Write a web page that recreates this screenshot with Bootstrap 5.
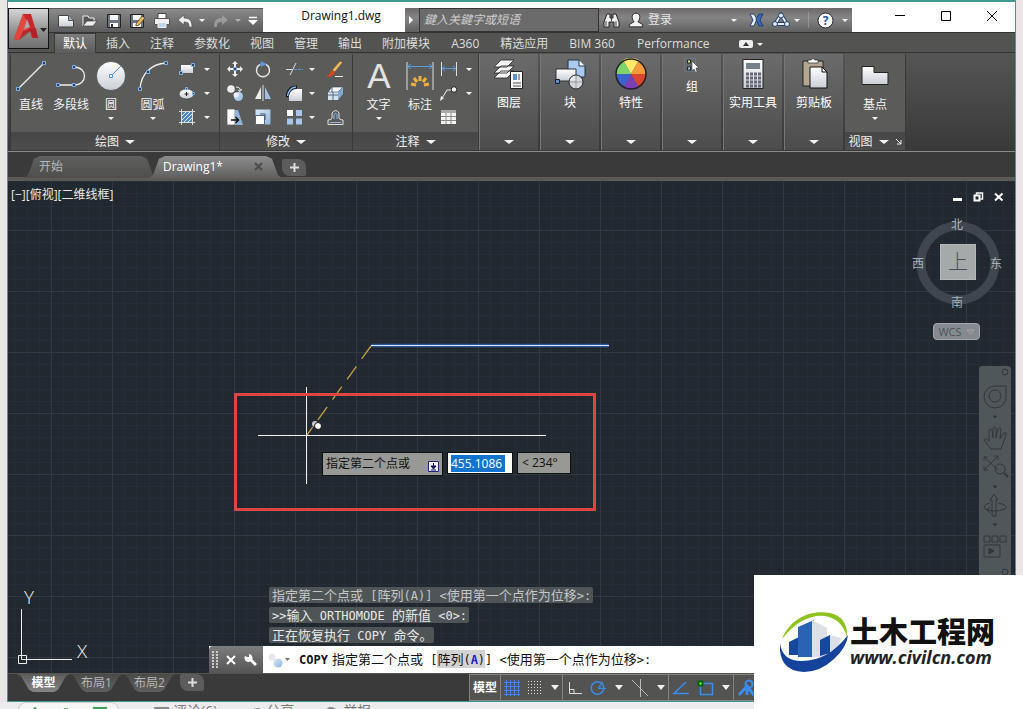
<!DOCTYPE html>
<html lang="zh-CN">
<head>
<meta charset="utf-8">
<meta name="viewport" content="width=device-width, initial-scale=1">
<title>Drawing1.dwg</title>
<link href="https://cdn.jsdelivr.net/npm/bootstrap@5.3.0/dist/css/bootstrap.min.css" rel="stylesheet">
<style>
body{font:12px/16px "Open Sans","Noto Sans CJK SC",sans-serif;color:#e6e6e6;background:#ebe5e8}
button,input{font:inherit;color:inherit;background:none;border:0;padding:0}
button{display:flex;align-items:center;justify-content:center}
svg{display:block;flex:none}
.app-window{margin:0 7px;border:1px solid #3f9a94;border-top-width:2px;background:#3a3a3a;min-height:0}
.titlebar{background:#fff;padding-top:6px;height:30px}
.qat{width:255px;padding-left:46px;background:linear-gradient(#8a8a8a,#5c5c5c);border-top:1px solid #555}
.qat .tool{width:24px}.qat .gap-arrow{width:10px}.qat .redo{width:26px;opacity:.45}.qat .more{width:20px}
.doc-title{color:#111;padding-left:14px;height:18px}
.infobar{width:447px;background:linear-gradient(#6c686a,#858585 40%,#606060)}
.expander{width:12px}
.search{width:180px;margin-left:2px;padding-left:4px;background:#6b6b6b;border:1px solid #333;font-style:italic}
.search::placeholder{color:#cfcfcf;opacity:1}
.win-ctl{width:163px;height:18px;color:#000}
.win-ctl button{width:46px}
.app-btn{left:0;top:6px;width:41px;height:41px;background:linear-gradient(#d5d5d5,#8d8d8d 60%,#6f6f6f);border:1px solid #111;z-index:3}
.tri{display:inline-block;width:0;height:0;border:3px solid transparent;border-top-color:#f2f2f2;border-bottom:0}
.tri-lg{border-width:4px 5px 0}
.tri-tall{border-width:5px 4px 0}
.ribbon-tabs{height:21px;background:#535451;padding-left:46px;border-top:1px solid #333;border-bottom:1px solid #333}
.ribbon-tabs button{padding:2px 10px 0;color:#dcdcdc;margin-bottom:-1px}
.ribbon-tabs .latin{padding:2px 11px 0}
.ribbon-tabs .current{background:linear-gradient(#7b7b7b,#5c5c5c);border:1px solid #3a3a3a;border-bottom:0;padding:1px 8px 0;color:#fff}
.ribbon{height:99px;padding:1px 0 1px 2px;background:linear-gradient(#555,#393939);border-bottom:1px solid #8c8c8c}
.panel{background:#5b5c5a;border-right:1px solid #3a3a3a;display:flex;flex-direction:column}
.panel:first-child{border-left:1px solid #3a3a3a}
.panel-draw{width:210px}.panel-modify{width:133px}.panel-note{width:126px}.panel-view{width:61px}
.panel-foot{height:18px;background:linear-gradient(#464646,#4e4e4e);color:#eee;gap:6px;padding-top:2px}
.big{width:40px;flex-direction:column;justify-content:flex-start;padding-top:6px;color:#f2f2f2;white-space:nowrap;height:76px}
.big-wide{width:43px}
.big svg{margin-bottom:5px}
.big .tri{margin-top:4px}
.smalls{display:grid;grid-auto-rows:24px;padding-top:3px}
.modify-grid{grid-template-columns:22px 34px 40px 30px}
.split{gap:6px}
.folded{width:59px;margin-right:2px;background:linear-gradient(#6b6b6b,#4c4c4c);flex-direction:column;justify-content:flex-start;padding-top:4px;color:#fff;border-left:1px solid #777}
.folded svg{margin-bottom:5px}
.folded .tri{margin:auto 0 6px}
.doctabs{height:29px;padding:4px 0 0 16px;border-bottom:4px solid #5a5b57}
.doctab{height:22px;clip-path:polygon(0 100%,4px 88%,10px 12%,16px 0,calc(100% - 16px) 0,calc(100% - 10px) 12%,calc(100% - 4px) 88%,100% 100%);background:linear-gradient(#5f605e,#4e4f4d);color:#b9b9b9;justify-content:flex-start;width:133px;padding-left:15px}
.doctab.current{background:linear-gradient(#8d8d8d,#5f605e);color:#fff;margin-left:-8px;padding:0 18px 0 14px}
.plus{width:24px;height:17px;background:#5c5c5c;border-radius:2px 8px 2px 8px;color:#ddd;margin-top:3px}
.canvas{background:#212830;min-height:0}
.vp-label{left:3px;top:6px;color:#e8e8e8}
.mdi{right:11px;top:11px;gap:10px}
.cube{right:11px;top:37px;width:92px;height:128px;color:#aab0b6}
.cube-face{left:28px;top:26px;width:36px;height:36px;background:#a5a9a9;color:#49505c;font-size:20px;font-weight:300;border:1px solid #b4b8b8}
.wcs{left:21px;top:105px;width:47px;height:17px;background:#858a90;border:1px solid #a3a7ab;border-radius:4px;color:#4d535b;font-size:11px;gap:4px}
.cube span{position:absolute}
.navbar-3d{right:4px;top:185px;bottom:88px;width:32px;background:#50575b;border-radius:3px}
.prompt{left:314px;top:271px;gap:4px;color:#111}
.dyn{background:#989894;border:1px solid #111;height:22px;padding:0 3px}
.dyn-main{width:121px;height:24px}
.dyn-num{width:66px;background:#fff}
.dyn-num input{background:#0f74d0;color:#fff;width:54px;height:17px}
.dyn-angle{width:54px}
.history{left:261px;bottom:30px;gap:4px;font-size:13px}
.history div{background:#4f5457;padding:0 2px 0 3px;height:16px;border-radius:2px;color:#c4c6c8;white-space:pre}
.history div:last-child,.history div:nth-child(2){color:#e8e8e8}
.mono{font:12px/14px "DejaVu Sans Mono",monospace}
.cmd{left:201px;bottom:0;right:60px;height:27px;background:#fff;color:#111;font-size:13px;white-space:pre;line-height:14px}
.cmd-grip{width:54px;background:linear-gradient(#7d7d7d,#555);height:100%;gap:8px;padding-left:3px;border-radius:4px 0 0 0}
.cmd mark{background:#d3d3d3;padding:0;color:#111}
.keyword{color:#2222c8}
.footerbar{height:28px;border-top:1px solid #55554f}
.sheets{width:461px;padding-left:9px}
.sheet{height:18px;clip-path:polygon(0 0,4px 12%,12px 88%,16px 100%,calc(100% - 16px) 100%,calc(100% - 12px) 88%,calc(100% - 4px) 12%,100% 0);background:linear-gradient(#4a4b49,#5f605e);color:#b5b5b5;width:53px}
.sheet.current{background:linear-gradient(#5b5c5a,#858585);color:#fff;font-weight:700}
.status{background:#535451;height:27px;border:1px solid #85857f}
.status .cell{border-right:1px solid #85857f;padding:0 3px;gap:8px}
.under{height:7px;overflow:hidden;background:#ececee;color:#777;font-size:14px;padding-left:18px}
.under span{gap:4px;padding-top:1px;margin-right:30px}
.under .pill{width:101px;height:30px;border:1px solid #ccc;border-radius:8px;background:#f6f6f6;margin-right:35px}
.brand{right:0;bottom:0;width:269px;height:134px;background:#fff;color:#111;z-index:5;padding-left:24px}
.brand-cn{font:900 29px/30px "Noto Sans CJK SC",sans-serif}
.brand-url{font:italic 700 18px/24px "Open Sans",sans-serif;color:#222}
</style>
</head>
<body class="vh-100 d-flex flex-column overflow-hidden position-relative">
<svg width="0" height="0" class="position-absolute">
 <defs>
  <linearGradient id="gw" x2="0" y2="1"><stop stop-color="#fff"/><stop offset="1" stop-color="#c9ced6"/></linearGradient>
  <linearGradient id="gb" x2="1" y2="1"><stop stop-color="#dbe9f8"/><stop offset="1" stop-color="#8fb4dc"/></linearGradient>
  <pattern id="grid" x="43" y="49" width="61" height="61" patternUnits="userSpaceOnUse">
   <path d="M12.500 0V61M24.500 0V61M37.500 0V61M49.500 0V61M0 12.500H61M0 24.500H61M0 37.500H61M0 49.500H61" stroke="#252d36"/>
   <path d="M.5 0V61M0 .5H61" stroke="#303943"/>
  </pattern>
 </defs>
</svg>
<main class="app-window flex-grow-1 d-flex flex-column position-relative">
 <header class="titlebar d-flex">
  <button class="app-btn position-absolute" aria-label="应用程序菜单">
   <svg width="36" height="36" viewBox="0 0 36 36"><path d="M3 28 12 3h8l7 24h-6l-2-7-9 3-3 6z" fill="#c8262b"/><path d="M12 3 3 28l5 1 11-13z" fill="#e2473f"/><path d="M16 8l3 8-6 2z" fill="#a9a9a9"/><path d="M8 29l12-9 2 7h5L25 17 12 20z" fill="#a91c22" opacity=".7"/><path d="M29 17h7l-3.500 4z" fill="#222"/></svg>
  </button>
  <div class="qat d-flex">
   <button class="tool" aria-label="新建"><svg width="16" height="14" viewBox="0 0 16 14"><path d="M.5 1.500h10l5 5v6.500H.5z" fill="url(#gw)" stroke="#444"/><path d="M10.500 1.500v5h5" fill="#aaa" stroke="#555"/></svg></button>
   <button class="tool" aria-label="打开"><svg width="16" height="14" viewBox="0 0 16 14"><path d="M1 12V2h5l1 2h5v3" fill="#555" stroke="#eee"/><path d="M1 12 5 7h10l-4 5z" fill="#eee" stroke="#333" stroke-width=".6"/></svg></button>
   <button class="tool" aria-label="保存"><svg width="14" height="14" viewBox="0 0 14 14"><path d="M.5.5h13v13H.5z" fill="#6b7480" stroke="#222"/><path d="M3 1h8v5H3z" fill="#f4f4f4"/><path d="M3 9h8v4H3z" fill="#fff"/><path d="M4 10h2v3H4z" fill="#333"/></svg></button>
   <button class="tool" aria-label="另存为"><svg width="16" height="14" viewBox="0 0 16 14"><path d="M.5.5h13v13H.5z" fill="#6b7480" stroke="#222"/><path d="M3 1h8v5H3zM3 9h8v4H3z" fill="#f4f4f4"/><path d="M6 10 12 2l3 2-6 7-3 1z" fill="#f0bd55" stroke="#333" stroke-width=".7"/></svg></button>
   <button class="tool" aria-label="打印"><svg width="16" height="15" viewBox="0 0 16 15"><path d="M4 .5h8V6H4z" fill="#fff" stroke="#444"/><path d="M.5 5.500h15v6H.5z" fill="#eee" stroke="#555"/><path d="M4 9.500h8v5H4z" fill="#bcd6ef" stroke="#eee"/></svg></button>
   <button class="tool" aria-label="放弃"><svg width="15" height="13" viewBox="0 0 15 13"><path d="M0 6 6 1v3c6 0 8 3 8 9h-3c0-4-1-5-5-5v3z" fill="#eee" stroke="#444" stroke-width=".6"/></svg></button>
   <button class="gap-arrow" aria-label="放弃列表"><span class="tri"></span></button>
   <button class="redo" aria-label="重做"><svg width="15" height="13" viewBox="0 0 15 13"><path d="M15 6 9 1v3C3 4 1 7 1 13h3c0-4 1-5 5-5v3z" fill="#ccc"/></svg></button>
   <button class="gap-arrow opacity-50" aria-label="重做列表"><span class="tri"></span></button>
   <button class="more" aria-label="自定义"><svg width="10" height="10" viewBox="0 0 10 10"><path d="M1 1.500h8" stroke="#fff" stroke-width="1.500"/><path d="M0 4h10L5 9z" fill="#fff"/></svg></button>
  </div>
  <div class="doc-title flex-grow-1 text-center">Drawing1.dwg</div>
  <div class="infobar d-flex align-items-stretch">
   <button class="expander" aria-label="展开"><svg width="6" height="8"><path d="M1 0 5 4 1 8z" fill="#fff"/></svg></button>
   <input class="search" type="text" placeholder="鍵入关鍵字或短语" aria-label="搜索">
   <button class="ms-1" aria-label="查找"><svg width="17" height="16" viewBox="0 0 17 16"><path d="M4 2h3v4h3V2h3l3 8v5h-5v-5H6v5H1v-5z" fill="#eee" stroke="#222"/><path d="M8.500 2v7M3 9v5M13 9v5" stroke="#444"/></svg></button>
   <button class="ms-2 gap-1"><svg width="16" height="16" viewBox="0 0 17 16"><path d="M8.500.8c5 0 5 6 2 9l5 3v2.500H1.500V12.800l5-3c-3-3-3-9 2-9z" fill="#f3f3f3" stroke="#222"/></svg>登录</button>
   <button class="ms-auto me-2 pe-1" aria-label="登录列表"><span class="tri"></span></button>
   <button class="me-2" aria-label="Exchange"><svg width="15" height="14" viewBox="0 0 15 14"><path d="M1 1h4l3 5-3 7H1l3-6z" fill="#e8eef7" stroke="#23406f"/><path d="M14 1h-4L7 6l3 7h4l-3-6z" fill="#3769b8" stroke="#23406f"/></svg></button>
   <button class="gap-1" aria-label="A360"><svg width="18" height="16" viewBox="0 0 18 16"><path d="M9 3 3 12h12z" fill="none" stroke="#26406e" stroke-width="4"/><path d="M9 3 3 12h12z" fill="none" stroke="#e8edf5" stroke-width="2"/><g fill="#dfe7f3" stroke="#26406e"><circle cx="9" cy="3.500" r="2.500"/><circle cx="3" cy="12" r="2.500"/><circle cx="15" cy="12" r="2.500"/></g></svg><span class="tri"></span></button>
   <span class="vr my-1 ms-2 me-2 align-self-stretch"></span>
   <button class="gap-2 pe-1" aria-label="帮助"><svg width="17" height="17" viewBox="0 0 17 17"><circle cx="8.500" cy="8.500" r="7.500" fill="#fff" stroke="#223"/><text x="8.500" y="13" font-size="12" font-weight="700" text-anchor="middle" fill="#23539b">?</text></svg><span class="tri"></span></button>
  </div>
  <div class="win-ctl d-flex justify-content-end">
   <button aria-label="最小化"><svg width="12" height="12"><path d="M1 4.500h10" stroke="#000"/></svg></button>
   <button aria-label="最大化"><svg width="12" height="12"><path d="M1.500.5h9v9h-9z" fill="none" stroke="#000"/></svg></button>
   <button aria-label="关闭"><svg width="12" height="12"><path d="M1 0 11 10M11 0 1 10" stroke="#000"/></svg></button>
  </div>
 </header>

 <nav class="ribbon-tabs d-flex">
  <button class="current">默认</button><button>插入</button><button>注释</button><button>参数化</button><button>视图</button><button>管理</button><button>输出</button><button>附加模块</button><button class="latin">A360</button><button>精选应用</button><button class="latin">BIM 360</button><button class="latin">Performance</button>
  <button class="ms-2 gap-1" aria-label="最小化功能区"><svg width="14" height="9"><rect width="14" height="8" rx="2" fill="#eee"/><path d="M4 6h6L7 2z" fill="#333"/></svg><span class="tri"></span></button>
 </nav>

 <section class="ribbon d-flex">
  <div class="panel panel-draw">
   <div class="d-flex flex-grow-1">
    <button class="big"><svg width="32" height="32" viewBox="0 0 32 32"><path d="M3 29 29 3" stroke="#eee" stroke-width="1.300"/><path d="M1.500 27.500h3v3h-3zM27.500 1.500h3v3h-3z" fill="#345" stroke="#7db0ee"/></svg>直线</button>
    <button class="big"><svg width="32" height="32" viewBox="0 0 32 32"><path d="M3 25H19c14 0 14-18 0-18" fill="none" stroke="#eee" stroke-width="1.300"/><path d="M1.500 23.500h3v3h-3zM17.500 23.500h3v3h-3zM17.500 5.500h3v3h-3z" fill="#345" stroke="#7db0ee"/></svg>多段线</button>
    <button class="big"><svg width="32" height="32" viewBox="0 0 32 32"><circle cx="16" cy="16" r="14.500" fill="url(#gw)" stroke="#333" stroke-width=".6"/><path d="M16 16 26 6" stroke="#4c8fdc"/><path d="M14.500 14.500h3v3h-3z" fill="#fff" stroke="#4c8fdc"/></svg>圆<span class="tri"></span></button>
    <button class="big big-wide"><svg width="32" height="32" viewBox="0 0 32 32"><path d="M3 29C4 14 14 4 29 3" fill="none" stroke="#eee" stroke-width="1.300"/><path d="M1.500 27.500h3v3h-3zM9.500 10.500h3v3h-3zM27.500 1.500h3v3h-3z" fill="#345" stroke="#7db0ee"/></svg>圆弧<span class="tri"></span></button>
    <div class="smalls">
     <button class="gap-2 ps-1" aria-label="矩形"><svg width="18" height="16" viewBox="0 0 18 16"><path d="M3 4h12v8H3z" fill="url(#gw)"/><path d="M1.500 10.500h3v3h-3zM13.500 2.500h3v3h-3z" fill="#345" stroke="#7db0ee"/></svg><span class="tri"></span></button>
     <button class="gap-2 ps-1" aria-label="椭圆"><svg width="18" height="16" viewBox="0 0 18 16"><ellipse cx="8.500" cy="9" rx="7.500" ry="5" fill="url(#gw)" stroke="#333" stroke-width=".6"/><path d="M8.500 7v4M6.500 9h4" stroke="#222"/><path d="M7.500 2.500h2v2h-2zM14.500 7.500h2v2h-2z" fill="#345" stroke="#7db0ee"/></svg><span class="tri"></span></button>
     <button class="gap-2 ps-1" aria-label="图案填充"><svg width="18" height="16" viewBox="0 0 18 16"><path d="M4 3h10v10H4z" fill="#4f86bd"/><path d="M4 7 8 3M4 11l8-8M6 13l8-8M10 13l4-4" stroke="#dbe9f8"/><path d="M3.500 0v16M14.500 0v16M1 2.500h16M1 13.500h16" stroke="#dcdcdc"/></svg><span class="tri"></span></button>
    </div>
   </div>
   <button class="panel-foot w-100">绘图<span class="tri tri-lg"></span></button>
  </div>

  <div class="panel panel-modify">
   <div class="smalls modify-grid flex-grow-1 ps-1">
     <button aria-label="移动"><svg width="16" height="16" viewBox="0 0 16 16"><path d="M8 0l3 3H9v3H7V3H5zM8 16l3-3H9v-3H7v3H5zM0 8l3-3v2h3v2H3v2zM16 8l-3-3v2h-3v2h3v2z" fill="#eee"/><path d="M6.500 6.500h3v3h-3z" fill="#345" stroke="#7db0ee"/></svg></button>
     <button aria-label="旋转"><svg width="16" height="17" viewBox="0 0 16 17"><path d="M5 3.500A6.500 6.500 0 1 0 11 3.500" fill="none" stroke="#e6e6e6" stroke-width="1.500"/><path d="M5 3.500Q8 2 11 3.500" fill="none" stroke="#5b9ae0" stroke-width="1.500"/><path d="M6 0v6l5-3z" fill="#5b9ae0"/></svg></button>
     <button class="split" aria-label="修剪"><svg width="17" height="14" viewBox="0 0 17 14"><path d="M0 7.500h6M4 13 10 1" stroke="#ddd"/><path d="M8 7.500h9" stroke="#5b9ae0" stroke-dasharray="3 1"/></svg><span class="tri"></span></button>
     <button aria-label="删除"><svg width="18" height="17" viewBox="0 0 18 17"><path d="M6 9 14 0l3 1-8 10z" fill="#eeb760" stroke="#333" stroke-width=".5"/><path d="M6 9l3 2c-1 4-5 5-9 5 4-2 4-5 6-7z" fill="#d44a1c"/><path d="M9 15.500h8" stroke="#eee"/></svg></button>
     <button aria-label="复制"><svg width="18" height="18" viewBox="0 0 18 18"><circle cx="5" cy="5" r="3.800" fill="#eee"/><circle cx="12.500" cy="12.500" r="4.500" fill="url(#gb)"/><circle cx="10" cy="11" r="2.500" fill="#eef"/><path d="M10 3q5 0 4 4M12 6l2 1.500L16 5" fill="none" stroke="#eee"/></svg></button>
     <button aria-label="镜像"><svg width="16" height="16" viewBox="0 0 16 16"><path d="M6 2v12H0z" fill="#eee"/><path d="M10 2v12h6z" fill="#9fc0e2"/><path d="M8 0v16" stroke="#ddd"/></svg></button>
     <button class="split" aria-label="圆角"><svg width="17" height="16" viewBox="0 0 17 16"><path d="M3 16V11Q4 4 11 4h5v12z" fill="url(#gw)"/><path d="M1 12Q2 2 11 2" fill="none" stroke="#111" stroke-width="3"/><path d="M1.500 11Q3 2.500 10 2" fill="none" stroke="#8ab8ee" stroke-width="1.500"/></svg><span class="tri"></span></button>
     <button aria-label="分解"><svg width="17" height="16" viewBox="0 0 17 16"><path d="M1 7h10v8H1z" fill="#d5e4f4"/><path d="M1 7l4-5h11l-5 5z" fill="#f2f6fb" stroke="#345" stroke-width=".6"/><path d="M11 7l5-5v7l-5 6z" fill="#7fa8d4"/><path d="M5 7V2M6 7v8M1 10h10" stroke="#567"/></svg></button>
     <button aria-label="拉伸"><svg width="16" height="16" viewBox="0 0 16 16"><path d="M0 0h8v16H0z" fill="#fff" stroke="#333" stroke-width=".6"/><path d="M8 1h3l5 15H8z" fill="#8fb4dc"/><path d="M4 11h7M8.500 8l3 3-3 3" fill="none" stroke="#111" stroke-width="1.500"/></svg></button>
     <button aria-label="缩放"><svg width="16" height="16" viewBox="0 0 16 16"><path d="M.5.5h15v15H.5z" fill="url(#gb)"/><path d="M.5 6.500h9v9h-9z" fill="#fff" stroke="#567"/><path d="M5 5h5v6" fill="none" stroke="#456"/></svg></button>
     <button class="split" aria-label="阵列"><svg width="17" height="16" viewBox="0 0 17 16"><path d="M1 1h6v6H1z" fill="#fff"/><path d="M10 1h6v6h-6zM1 9.500h6v6H1zM10 9.500h6v6h-6z" fill="#a8c6e7"/></svg><span class="tri"></span></button>
     <button aria-label="偏移"><svg width="17" height="16" viewBox="0 0 17 16"><path d="M1 15.500V11q4 0 4-2V4q4-5 7 0v5q0 2 4 2v4.500z" fill="none" stroke="#ddd"/><path d="M3 13.500h11M7 10V5.500q2-2.500 3 0V10" fill="none" stroke="#8ab8ee"/></svg></button>
   </div>
   <button class="panel-foot w-100">修改<span class="tri tri-lg"></span></button>
  </div>

  <div class="panel panel-note">
   <div class="d-flex flex-grow-1 ps-1">
    <button class="big big-wide"><svg width="32" height="32" viewBox="0 0 32 32"><text x="16" y="28" font-size="35" text-anchor="middle" fill="#e4e4e4" font-family="Liberation Sans" style="line-height:1">A</text></svg>文字<span class="tri"></span></button>
    <button class="big"><svg width="32" height="32" viewBox="0 0 32 32"><path d="M3 2v28M29 2v28" stroke="#ddd"/><path d="M3 6.500h26M7 4 3.500 6.500 7 9M25 4l3.500 2.500L25 9" fill="none" stroke="#5b9ae0"/><path d="M16 16v5M10 18l3 4M22 18l-3 4M7 24l5 1M25 24l-5 1" stroke="#f0b040" stroke-width="3"/></svg>标注</button>
    <div class="smalls">
     <button class="gap-2" aria-label="线性"><svg width="18" height="16" viewBox="0 0 18 16"><path d="M1.500 1v14M16.500 1v14" stroke="#ddd"/><path d="M2 7.500h14M5 5 2 7.500 5 10M13 5l3 2.500L13 10" fill="none" stroke="#5b9ae0"/></svg><span class="tri"></span></button>
     <button class="gap-2" aria-label="引线"><svg width="18" height="16" viewBox="0 0 18 16"><path d="M1 15 7 5h5" fill="none" stroke="#eee"/><path d="M0 16l1-5 3 2z" fill="#eee"/><circle cx="14" cy="4.500" r="2.800" fill="#eee" stroke="#222"/></svg><span class="tri"></span></button>
     <button class="justify-content-start" aria-label="表格"><svg width="17" height="16" viewBox="0 0 17 16"><path d="M1 1h15v14H1z" fill="#f4f4f4"/><path d="M1 1h15v3H1z" fill="#aaa"/><path d="M1 7.500h15M1 11.500h15M6 4v11M11 4v11" stroke="#888"/></svg></button>
    </div>
   </div>
   <button class="panel-foot w-100">注释<span class="tri tri-lg"></span></button>
  </div>

  <button class="folded"><svg width="32" height="32" viewBox="0 0 32 32"><g fill="#f4f4f4" stroke="#222" stroke-width=".8"><path d="M1 20 8 13h13l-7 7zM1 15 8 8h13l-7 7zM1 9 8 2h13l-7 7z"/></g><path d="M17.500 13.500h12v17h-12z" fill="#fff" stroke="#222"/><path d="M20 16h4v6h-4z" fill="#5b8fcf"/><path d="M26 16v6M20 25h8M20 28h8" stroke="#444"/></svg>图层<span class="tri tri-lg"></span></button>
  <button class="folded"><svg width="32" height="32" viewBox="0 0 32 32"><path d="M14 2h11l6 6v11H14z" fill="#a9c9ee" stroke="#234"/><path d="M25 2v6h6" fill="#fff" stroke="#234"/><path d="M2 11h20v12H2z" fill="url(#gw)" stroke="#333"/><path d="M1.500 21.500h4v4h-4z" fill="#5b8fcf" stroke="#123"/><circle cx="22" cy="24" r="7" fill="#e9edf2" fill-opacity=".85" stroke="#222"/><path d="M22 17v14M15 24h14" stroke="#777" stroke-width=".6"/></svg>块<span class="tri tri-lg"></span></button>
  <button class="folded"><svg width="32" height="32" viewBox="0 0 32 32"><path d="M16 16 8 2a16 16 0 0 1 16 0z" fill="#ffe867"/><path d="M16 16 24 2a16 16 0 0 1 7 14z" fill="#f29a3c"/><path d="M16 16h15a16 16 0 0 1-7 14z" fill="#d9452f"/><path d="M16 16 24 30a16 16 0 0 1-16 0z" fill="#7b3fb5"/><path d="M16 16 8 30A16 16 0 0 1 1 16z" fill="#3b62cf"/><path d="M16 16H1A16 16 0 0 1 8 2z" fill="#7fd36a"/><circle cx="16" cy="16" r="15" fill="none" stroke="#222" stroke-width="1.500"/></svg>特性<span class="tri tri-lg"></span></button>
  <button class="folded"><svg width="16" height="16" viewBox="0 0 16 16"><path d="M.5.500h11v13H.5z" fill="none" stroke="#6b94c9" stroke-dasharray="1 2"/><path d="M3.500 2h3v3h-3z" fill="#dff08e" stroke="#222"/><path d="M3.500 9h3v3h-3z" fill="#a9c9ee" stroke="#222"/><path d="M8 3v10l2-2 2 4 1-1-1-4h3z" fill="#fff" stroke="#333" stroke-width=".6"/></svg>组<span class="tri tri-lg"></span></button>
  <button class="folded"><svg width="32" height="32" viewBox="0 0 32 32"><path d="M6 1.500h20v29H6z" fill="url(#gw)" stroke="#222"/><path d="M9 5h14v6H9z" fill="#75818d"/><g stroke="#667" stroke-width="3" stroke-dasharray="3 1"><path d="M9 16h15M9 20h15M9 24h15M9 28h15"/></g></svg>实用工具<span class="tri tri-lg"></span></button>
  <button class="folded"><svg width="32" height="32" viewBox="0 0 32 32"><path d="M5 3h20v25H5z" fill="#b5a78f" stroke="#222"/><path d="M10 4V2h3q2-3 4 0h3v3H10z" fill="#fff" stroke="#222" stroke-width=".7"/><path d="M12 9h12l5 5v16H12z" fill="url(#gw)" stroke="#111"/><path d="M24 9v5h5z" fill="#fff" stroke="#111"/></svg>剪贴板<span class="tri tri-lg"></span></button>
  <div class="panel panel-view">
   <button class="big w-100"><svg width="32" height="32" viewBox="0 0 32 32"><path d="M3 6.500h12v6h14v12H3z" fill="url(#gw)" stroke="#222"/></svg>基点<span class="tri"></span></button>
   <button class="panel-foot w-100 mt-auto">视图<span class="tri tri-lg"></span><svg width="7" height="8"><path d="M1 1 6 6M6 2v4H2" fill="none" stroke="#eee"/></svg></button>
  </div>
 </section>

 <nav class="doctabs d-flex">
  <button class="doctab">开始</button>
  <button class="doctab current justify-content-between">Drawing1*<svg width="10" height="10"><path d="M1 1 8 8M8 1 1 8" stroke="#4b4b4b" stroke-width="2"/></svg></button>
  <button class="plus" aria-label="新图形"><svg width="9" height="9"><path d="M4.500 0v9M0 4.500h9" stroke="#ddd" stroke-width="2"/></svg></button>
 </nav>

 <section class="canvas flex-grow-1 position-relative overflow-hidden">
  <svg class="position-absolute w-100 h-100">
   <rect width="100%" height="100%" fill="url(#grid)"/>
   <path d="M363 164.500H601" stroke="#2a5db5" stroke-width="4" opacity=".5"/><path d="M363 164.500H601" stroke="#2f66c4" stroke-width="2"/><path d="M363 164.500H601" stroke="#dbe8ff"/>
   <path d="M363 165 299 254" stroke="#c6a03f" stroke-width="1.300" stroke-dasharray="16 9"/>
   <path d="M298.500 206V303M250 254.500H538" stroke="#f2f2f2"/>
   <circle cx="307" cy="243" r="3" fill="#ccc"/><circle cx="310" cy="245" r="3.500" fill="#fff" stroke="#111"/>
   <rect x="227.500" y="213.500" width="359" height="115" fill="none" stroke="#e04545" stroke-width="3"/>
  </svg>
  <div class="vp-label position-absolute">[−][俯视][二维线框]</div>
  <div class="mdi position-absolute d-flex">
   <button aria-label="最小化视口"><svg width="11" height="10"><path d="M1 7.500h9" stroke="#fff" stroke-width="3"/></svg></button>
   <button aria-label="还原视口"><svg width="11" height="10"><path d="M3.500 3V1h6v6h-2" fill="none" stroke="#fff" stroke-width="1.500"/><path d="M1.500 3.500h5v5h-5z" fill="none" stroke="#fff" stroke-width="2"/></svg></button>
   <button aria-label="关闭视口"><svg width="10" height="10"><path d="M1 1.500 8.500 8.500M8.500 1.500 1 8.500" stroke="#fff" stroke-width="2"/></svg></button>
  </div>
  <div class="cube position-absolute">
   <svg class="position-absolute" width="92" height="92"><circle cx="46" cy="45" r="37" fill="none" stroke="#3f464f" stroke-width="9"/></svg>
   <span style="left:39px;top:-1px">北</span><span style="left:0;top:38px">西</span><span style="left:78px;top:38px">东</span><span style="left:39px;top:77px">南</span>
   <button class="cube-face position-absolute">上</button>
   <button class="wcs position-absolute">WCS<svg width="9" height="6"><path d="M1 1h7L4.500 5z" fill="none" stroke="#a3a7ab"/></svg></button>
  </div>
  <div class="navbar-3d position-absolute overflow-hidden">
   <svg width="32" height="218" viewBox="0 0 32 218" fill="none" stroke="#30363d"><circle cx="26" cy="6" r="3"/><path d="M27 20v10a11 11 0 1 1-11-10z"/><circle cx="16" cy="30" r="6"/><path d="M14 50h4l-2 2zM14 120h4l-2 2zM14 158h4l-2 2z" fill="#30363d"/><path d="M12 83 5 74q1-3 5 1V64q2-2 3 0l1 8V62q2-2 3 0v10l2-9q2-2 3 0l-1 10 4-6q3-1 2 2l-5 14z"/><path d="M5 91 19 104M5 104 19 90M5 95v-4h4M15 90h4v4M5 100v4h4"/><circle cx="21" cy="103" r="5"/><path d="M25 107l4 4" stroke-width="2"/><path d="M13 150v-16h-2l4-6 4 6h-2v16zM11 137q-8 2-5 6 9 4 20 0 4-4-7-6M11 141l-3 3 3 3"/><path d="M5 170h6v6H5zM13 170h6v6h-6zM21 170h6v6h-6zM5 179h16v12H5z"/><path d="M10 182v6l5-3z" fill="#30363d"/><circle cx="26" cy="206" r="3"/></svg>
  </div>
  <svg class="position-absolute bottom-0 start-0" width="90" height="90"><path d="M13.500 26V72M19 76.500H64" stroke="#eee"/><path d="M10.500 72.500h8v8h-8z" fill="none" stroke="#eee"/><path d="M13.500 72v4.500H18" fill="none" stroke="#eee"/><text x="21" y="21" text-anchor="middle" font-size="19" font-weight="300" fill="#eee">Y</text><text x="74" y="75" text-anchor="middle" font-size="19" font-weight="300" fill="#eee">X</text></svg>
  <div class="prompt position-absolute d-flex align-items-start">
   <label class="dyn dyn-main d-flex align-items-center justify-content-between" for="dist">指定第二个点或<svg width="11" height="11" class="mt-1"><path d="M.5.5h10v10H.5z" fill="#eef" stroke="#228"/><path d="M5.500 2v4M3 5h5L5.500 8zM3 9h5" stroke="#114" fill="#114"/></svg></label>
   <div class="dyn dyn-num d-flex align-items-center"><input id="dist" type="text" value="455.1086"></div>
   <div class="dyn dyn-angle d-flex align-items-center px-1"><span>&lt; 234°</span></div>
  </div>
  <div class="history position-absolute d-flex flex-column align-items-start">
   <div>指定第二个点或<span class="mono"> [</span>阵列<span class="mono">(A)] &lt;</span>使用第一个点作为位移<span class="mono">&gt;:</span></div>
   <div><span class="mono">&gt;&gt;</span>输入<span class="mono"> ORTHOMODE </span>的新值<span class="mono"> &lt;0&gt;:</span></div>
   <div>正在恢复执行<span class="mono"> COPY </span>命令。</div>
  </div>
  <div class="cmd position-absolute d-flex align-items-center">
   <div class="cmd-grip d-flex align-items-center"><svg width="6" height="18"><path d="M1 0v18M5 0v18" stroke="#ccc" stroke-width="2" stroke-dasharray="2 1"/></svg>
    <button aria-label="关闭"><svg width="10" height="10"><path d="M1 1 9 9M9 1 1 9" stroke="#fff" stroke-width="2"/></svg></button>
    <button aria-label="自定义"><svg width="14" height="14" viewBox="0 0 14 14"><path d="M5 5l7 7" stroke="#fff" stroke-width="3"/><path d="M1 3a4 4 0 1 0 4-2v3H3z" fill="#fff"/></svg></button></div>
   <button class="ms-1 me-2" aria-label="最近使用的命令"><svg width="24" height="18" viewBox="0 0 24 18"><circle cx="5" cy="6" r="3.500" fill="#e6e8ec"/><circle cx="11" cy="12" r="4.500" fill="url(#gb)"/><path d="M18 7h5l-2.500 3z" fill="#777"/></svg></button>
   <b class="mono fw-bold me-1">COPY</b><span>指定第二个点或<span class="mono"> [</span><mark>阵列<span class="mono">(<b class="keyword">A</b>)</span></mark><span class="mono">] &lt;</span>使用第一个点作为位移<span class="mono">&gt;:</span></span>
  </div>
 </section>

 <footer class="footerbar d-flex">
  <nav class="sheets d-flex"><button class="sheet current">模型</button><button class="sheet">布局1</button><button class="sheet">布局2</button><button class="plus mt-0 ms-1" aria-label="新布局"><svg width="9" height="9"><path d="M4.500 0v9M0 4.500h9" stroke="#ddd" stroke-width="2"/></svg></button></nav>
  <div class="status d-flex flex-grow-1">
   <div class="cell d-flex"><button class="fw-bold text-white">模型</button></div>
   <div class="cell d-flex">
    <button aria-label="栅格"><svg width="16" height="16"><path d="M2.500 0v16M6.500 0v16M10.500 0v16M14.500 0v16M0 2.500h16M0 6.500h16M0 10.500h16M0 14.500h16" stroke="#3b8cf0"/></svg></button>
    <button aria-label="捕捉"><svg width="15" height="15"><path d="M0 1.500h15M0 4.500h15M0 7.500h15M0 10.500h15M0 13.500h15" stroke="#ddd" stroke-dasharray="1 2"/></svg></button>
    <button aria-label="捕捉列表"><span class="tri tri-tall"></span></button></div>
   <div class="cell d-flex">
    <button aria-label="正交"><svg width="16" height="16"><path d="M3.500 2v11.500H16M4 9.500h4v4" fill="none" stroke="#ddd"/></svg></button>
    <button aria-label="极轴"><svg width="17" height="16"><circle cx="7.500" cy="8" r="6.300" fill="none" stroke="#3b8cf0" stroke-width="1.500"/><path d="M8 8.500h8M8 8l5-6M10 5v3" stroke="#3b8cf0"/></svg></button>
    <button aria-label="极轴列表"><span class="tri tri-tall"></span></button>
    <button aria-label="等轴测"><svg width="18" height="18"><path d="M1 1 17 17M9.500 0v18" stroke="#bbb"/></svg></button>
    <button aria-label="等轴测列表"><span class="tri tri-tall"></span></button></div>
   <div class="cell d-flex">
    <button aria-label="对象捕捉追踪"><svg width="17" height="16"><path d="M14 2 2 13.500H17" fill="none" stroke="#3b8cf0" stroke-width="1.500"/></svg></button>
    <button aria-label="对象捕捉"><svg width="17" height="16"><path d="M3.500 3.500h12v11h-12z" fill="none" stroke="#3b8cf0" stroke-width="1.500"/><path d="M1.500 1.500h4v4h-4z" fill="#9f6" stroke="#060" stroke-width="2"/></svg></button>
    <button aria-label="对象捕捉列表"><span class="tri tri-tall"></span></button></div>
   <button class="ps-1" aria-label="注释比例"><svg width="18" height="18"><path d="M1 16 9 7l7 9M9 8v8" stroke="#3b8cf0" stroke-width="3" fill="none"/><circle cx="11" cy="5" r="3.500" fill="none" stroke="#3b8cf0" stroke-width="2"/></svg></button>
  </div>
 </footer>
</main>

<div class="under d-flex align-items-start">
 <div class="pill d-flex justify-content-around pt-1"><svg width="10" height="12"><path d="M1 8 5 1l4 7" fill="none" stroke="#3aa655" stroke-width="2"/></svg><svg width="8" height="12"><circle cx="4" cy="4" r="3" fill="#3aa655"/></svg><svg width="14" height="12"><path d="M1 1h12v10H1z" fill="none" stroke="#3aa655" stroke-width="2"/></svg></div>
 <span class="d-flex"><svg width="15" height="14" class="mt-1"><path d="M1 1h13v12H1z" fill="none" stroke="#888" stroke-width="2"/></svg>评论(6)</span>
 <span class="d-flex"><svg width="15" height="14" class="mt-1"><path d="M2 10Q2 2 13 2" fill="none" stroke="#888" stroke-width="2"/></svg>分享</span>
 <span class="d-flex"><svg width="15" height="14" class="mt-1"><circle cx="7" cy="7" r="6" fill="none" stroke="#888" stroke-width="2"/></svg>举报</span>
</div>

<aside class="brand position-absolute d-flex align-items-center">
 <svg width="72" height="62" viewBox="0 0 72 62"><path d="M11 44V31l10-5v18z" fill="#15479c"/><path d="M20 46V16l16-7v37z" fill="#2a62b4"/><path d="M34 9l15 8v29H34z" fill="#dcdfe6"/><path d="M42 45V29l10-5v18z" fill="#15479c"/><path d="M52 24l11 3-3 10-8 4z" fill="#dcdfe6"/><path d="M4 28C12 8 32-2 52 2q18 4 17 24Q64 8 47 5 24 3 4 28z" fill="#8dc21f"/><path d="M2 32q2 18 22 18 26 0 46-26-1 12-14 24-14 13-30 13Q0 60 2 32z" fill="#15429a"/></svg>
 <div><div class="brand-cn">土木工程网</div><div class="brand-url">www.civilcn.com</div></div>
</aside>
<script src="https://cdn.jsdelivr.net/npm/bootstrap@5.3.0/dist/js/bootstrap.bundle.min.js"></script>
</body>
</html>
